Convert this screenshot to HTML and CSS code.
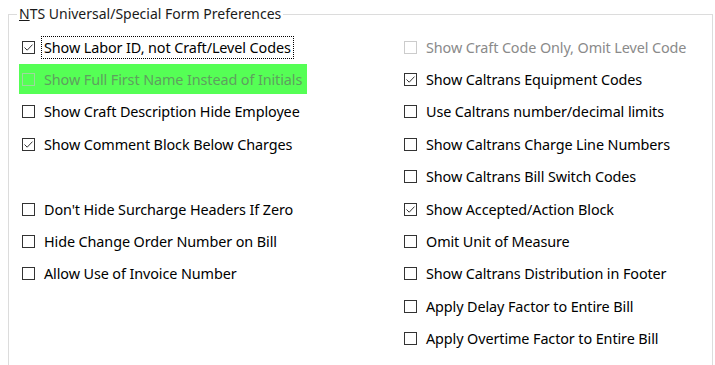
FILE: index.html
```html
<!DOCTYPE html>
<html lang="en">
<head>
    <meta charset="UTF-8">
    <title>NTS Universal/Special Form Preferences</title>
    <link rel="stylesheet" href="styles.css">
</head>
<body>

<fieldset class="group">
    <legend><u>N</u>TS Universal/Special Form Preferences</legend>

    <div class="options">
        <!-- left column -->
        <div class="col">
            <label class="opt focused"><span class="box checked"><svg viewBox="0 0 13 13"><path d="M2.5 6.5 L5.2 9.2 L10.5 3.6"/></svg></span><span class="txt">Show Labor ID, not Craft/Level Codes</span></label>
            <label class="opt disabled highlight"><span class="box"></span><span class="txt">Show Full First Name Instead of Initials</span></label>
            <label class="opt"><span class="box"></span><span class="txt">Show Craft Description Hide Employee</span></label>
            <label class="opt"><span class="box checked"><svg viewBox="0 0 13 13"><path d="M2.5 6.5 L5.2 9.2 L10.5 3.6"/></svg></span><span class="txt">Show Comment Block Below Charges</span></label>
            <div class="opt"></div>
            <label class="opt"><span class="box"></span><span class="txt">Don't Hide Surcharge Headers If Zero</span></label>
            <label class="opt"><span class="box"></span><span class="txt">Hide Change Order Number on Bill</span></label>
            <label class="opt"><span class="box"></span><span class="txt">Allow Use of Invoice Number</span></label>
        </div>

        <!-- right column -->
        <div class="col">
            <label class="opt disabled"><span class="box"></span><span class="txt">Show Craft Code Only, Omit Level Code</span></label>
            <label class="opt"><span class="box checked"><svg viewBox="0 0 13 13"><path d="M2.5 6.5 L5.2 9.2 L10.5 3.6"/></svg></span><span class="txt">Show Caltrans Equipment Codes</span></label>
            <label class="opt"><span class="box"></span><span class="txt">Use Caltrans number/decimal limits</span></label>
            <label class="opt"><span class="box"></span><span class="txt">Show Caltrans Charge Line Numbers</span></label>
            <label class="opt"><span class="box"></span><span class="txt">Show Caltrans Bill Switch Codes</span></label>
            <label class="opt"><span class="box checked"><svg viewBox="0 0 13 13"><path d="M2.5 6.5 L5.2 9.2 L10.5 3.6"/></svg></span><span class="txt">Show Accepted/Action Block</span></label>
            <label class="opt"><span class="box"></span><span class="txt">Omit Unit of Measure</span></label>
            <label class="opt"><span class="box"></span><span class="txt">Show Caltrans Distribution in Footer</span></label>
            <label class="opt"><span class="box"></span><span class="txt">Apply Delay Factor to Entire Bill</span></label>
            <label class="opt"><span class="box"></span><span class="txt">Apply Overtime Factor to Entire Bill</span></label>
        </div>
    </div>
</fieldset>

</body>
</html>
```

FILE: styles.css
```css
body {
    margin: 0;
    background-color: #fff;
    font-family: "Noto Sans", "Open Sans", sans-serif;
    font-size: 14.4px;
    color: #000;
    height: 365px;
    overflow: hidden;
}
.group {
    margin: 4px 2px 0 8px;
    padding: 7px 0 24px 0;
    border: 1px solid #dcdcdc;
    min-width: 0;
}
.group legend {
    margin-left: 8px;
    padding: 0 2px;
    color: #1a1a1a;
    font-size: 14px;
    line-height: 20px;
}
.options {
    display: grid;
    grid-template-columns: 382px 1fr;
}
.col {
    display: flex;
    flex-direction: column;
}
.opt {
    display: flex;
    align-items: center;
    height: 32.4px;
    padding-left: 13px;
    white-space: nowrap;
}
.box {
    width: 11px;
    height: 11px;
    border: 1px solid #333;
    background: #fff;
    flex: none;
    position: relative;
}
.box svg {
    position: absolute;
    left: -1px;
    top: -1px;
    width: 13px;
    height: 13px;
    fill: none;
    stroke: #333;
    stroke-width: 1;
}
.txt {
    margin-left: 6px;
    padding: 1px 2px;
    border: 1px solid transparent;
    letter-spacing: -0.1px;
}
.focused .txt {
    border: 1px dotted #000;
}
.disabled .box {
    border-color: #cccccc;
}
.disabled .txt {
    color: #8a8a8a;
}
.highlight {
    background-color: #55ff55;
    margin-left: 10px;
    width: 285px;
    padding-left: 3px;
    height: 30px;
    margin-top: 1px;
    margin-bottom: 1.4px;
}
.highlight .box {
    background: transparent;
    border-color: #9ed89e;
}
.highlight .txt {
    color: #5f9f5f;
}
```
